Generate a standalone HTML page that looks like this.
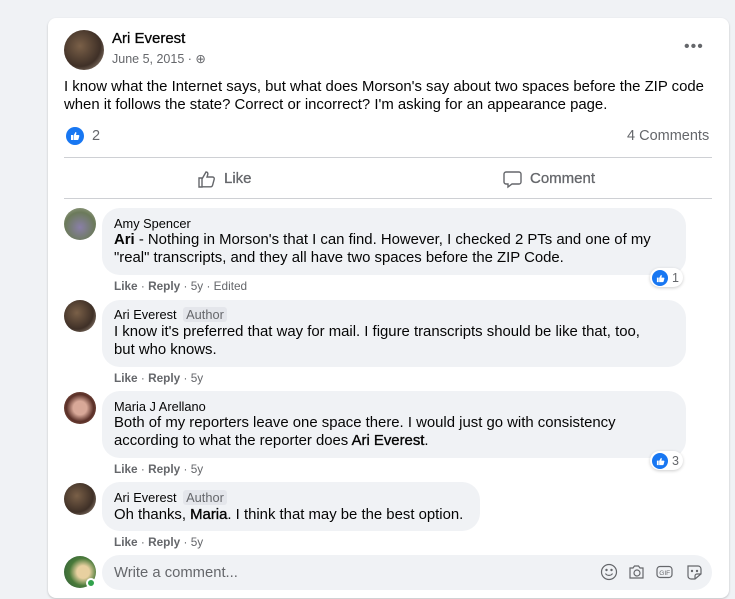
<!DOCTYPE html>
<html><head><meta charset="utf-8"><style>
*{margin:0;padding:0;box-sizing:border-box}
body{width:735px;height:599px;background:#f0f2f5;font-family:"Liberation Sans",sans-serif;color:#050505;position:relative;overflow:hidden}
.card{position:absolute;left:48px;top:18px;width:681px;height:580px;background:#fff;border-radius:8px;box-shadow:0 1px 2px rgba(0,0,0,.2)}
.a{position:absolute}
.av{position:absolute;border-radius:50%;overflow:hidden}
.t{font-size:14.9px;line-height:19px;position:absolute;white-space:nowrap}
.bub{position:absolute;background:#f0f2f5;border-radius:18px}
.nm{font-size:12.8px;position:absolute;white-space:nowrap}
.meta{position:absolute;font-size:11.8px;color:#65676b;white-space:nowrap}
.meta b{font-weight:bold}
.auth{background:#e4e6eb;color:#65676b;padding:0 3px;border-radius:3px;margin-left:3px}
.lk{position:absolute;height:19px;background:#fff;border-radius:10px;box-shadow:0 1px 3px rgba(0,0,0,.2);font-size:12.5px;color:#65676b;padding:1px 4px 0 2px;display:flex;align-items:center;gap:4px}
.like{width:16px;height:16px;border-radius:50%;background:#1877f2;display:inline-flex;align-items:center;justify-content:center}
</style></head><body>
<div class="card"></div>
<div class="av" style="left:64px;top:30px;width:40px;height:40px;background:radial-gradient(circle at 40% 40%,#7a6048,#3f3027 60%,#b8a898)"></div>
<div class="a" style="left:112px;top:30px;font-size:15px;color:#050505;-webkit-text-stroke:0.3px #050505">Ari Everest</div>
<div class="a" style="left:112px;top:51px;font-size:12.5px;color:#65676b">June 5, 2015 · ⊕</div>
<div class="a" style="left:684px;top:38px;font-size:16px;color:#65676b;letter-spacing:1px">•••</div>
<div class="t" style="left:64px;top:78px">I know what the Internet says, but what does Morson's say about two spaces before the ZIP code</div>
<div class="t" style="left:64px;top:96px">when it follows the state? Correct or incorrect? I'm asking for an appearance page.</div>
<div class="a" style="left:66px;top:127px"><span class="like" style="width:18px;height:18px"><svg width="10" height="10" viewBox="0 0 10 10"><path d="M1 4h2v5H1z M3.5 4.5L5.5 1c.8 0 1 .6.9 1.3L6 4h2.5c.6 0 1 .5.8 1.1l-.8 3c-.1.5-.5.9-1 .9H3.5z" fill="#fff"/></svg></span></div>
<div class="a" style="left:92px;top:128px;font-size:14.5px;color:#65676b">2</div>
<div class="a" style="left:627px;top:128px;font-size:14.5px;color:#65676b">4 Comments</div>
<div class="a" style="left:64px;top:157px;width:648px;height:1px;background:#ced0d4"></div>
<div class="a" style="left:198px;top:170px;width:18px;height:18px">
<svg width="18" height="18" viewBox="0 0 18 18" fill="none" stroke="#65676b" stroke-width="1.4"><path d="M1 8h3v9H1z M4 9l4-7c1.5 0 2 1 1.8 2.5L9 7h5.5c1.3 0 2 1 1.7 2.2l-1.6 6c-.3 1-1 1.6-2 1.6H4"/></svg></div>
<div class="a" style="left:224px;top:170px;font-size:15px;color:#65676b;-webkit-text-stroke:0.3px #65676b">Like</div>
<div class="a" style="left:503px;top:170px"><svg width="19" height="19" viewBox="0 0 19 19" fill="none" stroke="#65676b" stroke-width="1.4"><path d="M3 2h13a2 2 0 0 1 2 2v8a2 2 0 0 1-2 2H9l-4 3v-3H3a2 2 0 0 1-2-2V4a2 2 0 0 1 2-2z"/></svg></div>
<div class="a" style="left:530px;top:170px;font-size:15px;color:#65676b;-webkit-text-stroke:0.3px #65676b">Comment</div>
<div class="a" style="left:64px;top:198px;width:648px;height:1px;background:#ced0d4"></div>
<!-- c1 -->
<div class="av" style="left:64px;top:208px;width:32px;height:32px;background:radial-gradient(circle at 50% 60%,#8a7fa8,#6b7a5a 60%,#aab09a)"></div>
<div class="bub" style="left:102px;top:208px;width:584px;height:67px"></div>
<div class="nm" style="left:114px;top:216px">Amy Spencer</div>
<div class="t" style="left:114px;top:231px"><b>Ari</b> - Nothing in Morson's that I can find. However, I checked 2 PTs and one of my</div>
<div class="t" style="left:114px;top:249px">"real" transcripts, and they all have two spaces before the ZIP Code.</div>
<div class="lk" style="left:650px;top:268px"><span class="like"><svg width="9" height="9" viewBox="0 0 10 10"><path d="M1 4h2v5H1z M3.5 4.5L5.5 1c.8 0 1 .6.9 1.3L6 4h2.5c.6 0 1 .5.8 1.1l-.8 3c-.1.5-.5.9-1 .9H3.5z" fill="#fff"/></svg></span>1</div>
<div class="meta" style="left:114px;top:279px"><b>Like</b> · <b>Reply</b> · 5y · Edited</div>
<!-- c2 -->
<div class="av" style="left:64px;top:300px;width:32px;height:32px;background:radial-gradient(circle at 40% 40%,#7a6048,#3f3027 60%,#b8a898)"></div>
<div class="bub" style="left:102px;top:300px;width:584px;height:67px"></div>
<div class="nm" style="left:114px;top:307px">Ari Everest <span class="auth">Author</span></div>
<div class="t" style="left:114px;top:323px">I know it's preferred that way for mail. I figure transcripts should be like that, too,</div>
<div class="t" style="left:114px;top:341px">but who knows.</div>
<div class="meta" style="left:114px;top:371px"><b>Like</b> · <b>Reply</b> · 5y</div>
<!-- c3 -->
<div class="av" style="left:64px;top:392px;width:32px;height:32px;background:radial-gradient(circle at 50% 50%,#d8a898 30%,#5a3028 60%,#8a5a4a)"></div>
<div class="bub" style="left:102px;top:391px;width:584px;height:67px"></div>
<div class="nm" style="left:114px;top:399px">Maria J Arellano</div>
<div class="t" style="left:114px;top:414px">Both of my reporters leave one space there. I would just go with consistency</div>
<div class="t" style="left:114px;top:432px">according to what the reporter does <span style="-webkit-text-stroke:0.35px #050505">Ari Everest</span>.</div>
<div class="lk" style="left:650px;top:451px"><span class="like"><svg width="9" height="9" viewBox="0 0 10 10"><path d="M1 4h2v5H1z M3.5 4.5L5.5 1c.8 0 1 .6.9 1.3L6 4h2.5c.6 0 1 .5.8 1.1l-.8 3c-.1.5-.5.9-1 .9H3.5z" fill="#fff"/></svg></span>3</div>
<div class="meta" style="left:114px;top:462px"><b>Like</b> · <b>Reply</b> · 5y</div>
<!-- c4 -->
<div class="av" style="left:64px;top:483px;width:32px;height:32px;background:radial-gradient(circle at 40% 40%,#7a6048,#3f3027 60%,#b8a898)"></div>
<div class="bub" style="left:102px;top:482px;width:378px;height:49px"></div>
<div class="nm" style="left:114px;top:490px">Ari Everest <span class="auth">Author</span></div>
<div class="t" style="left:114px;top:506px">Oh thanks, <span style="-webkit-text-stroke:0.35px #050505">Maria</span>. I think that may be the best option.</div>
<div class="meta" style="left:114px;top:535px"><b>Like</b> · <b>Reply</b> · 5y</div>
<!-- write -->
<div class="av" style="left:64px;top:556px;width:32px;height:32px;background:radial-gradient(circle at 60% 50%,#e8d0a0 25%,#4a7a3a 55%,#2a5a3a)"></div>
<div class="a" style="left:86px;top:578px;width:10px;height:10px;border-radius:50%;background:#31a24c;border:2px solid #fff"></div>
<div class="bub" style="left:102px;top:555px;width:610px;height:35px"></div>
<div class="a" style="left:114px;top:565px;font-size:14.8px;color:#65676b">Write a comment...</div>
<svg class="a" style="left:600px;top:563px" width="104" height="18" viewBox="0 0 104 18" fill="none" stroke="#65676b" stroke-width="1.2">
<circle cx="9" cy="9" r="7.5"/><circle cx="6.5" cy="7" r=".6" fill="#65676b"/><circle cx="11.5" cy="7" r=".6" fill="#65676b"/><path d="M5.5 10.5c1.5 2.5 5.5 2.5 7 0"/>
<path d="M30 5h3l1.5-2h4l1.5 2h3v10H30z"/><circle cx="37" cy="10" r="3"/>
<rect x="57" y="3.5" width="15" height="11" rx="3"/><text x="59.3" y="12" font-size="6.5" fill="#65676b" stroke="none" font-family="Liberation Sans">GIF</text>
<path d="M88 3h10a3 3 0 0 1 3 3v5l-6 5h-4a3 3 0 0 1-3-3z M101 11h-4a2 2 0 0 0-2 2v3"/><circle cx="92" cy="8" r=".6" fill="#65676b"/><circle cx="97" cy="8" r=".6" fill="#65676b"/>
</svg>
</body></html>
